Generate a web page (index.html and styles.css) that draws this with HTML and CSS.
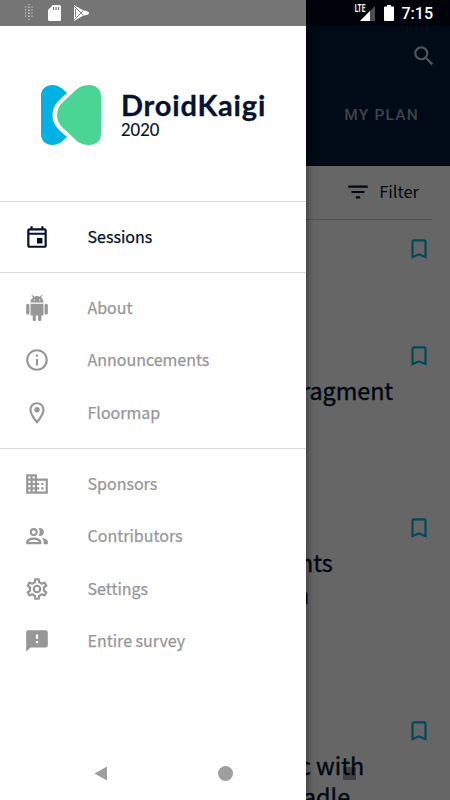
FILE: index.html
```
<!DOCTYPE html>
<html lang="en">
<head>
<meta charset="utf-8">
<title>DroidKaigi 2020</title>
<link rel="stylesheet" href="styles.css">
</head>
<body>
<div class="screen">
  <main class="page">
    <header class="appbar">
      <svg class="icon search" viewBox="0 0 24 24"><path d="M15.5 14h-.79l-.28-.27A6.47 6.47 0 0 0 16 9.5 6.5 6.5 0 1 0 9.5 16c1.61 0 3.09-.59 4.23-1.57l.27.28v.79l5 4.99L20.49 19l-4.99-5zm-6 0C7.01 14 5 11.99 5 9.500S7.010 5 9.500 5 14 7.010 14 9.500 11.990 14 9.500 14z"/></svg>
      <div class="tab">MY PLAN</div>
    </header>
    <div class="filter">
      <svg class="icon" viewBox="0 0 24 24"><path d="M10 18h4v-2h-4v2zM3 6v2h18V6H3zm3 7h12v-2H6v2z"/></svg>
      <span>Filter</span>
    </div>
    <article class="session s1">
      <svg class="icon mark" viewBox="0 0 24 24"><path d="M17 3H7c-1.100 0-1.990.9-1.990 2L5 21l7-3 7 3V5c0-1.100-.9-2-2-2zm0 15-5-2.180L7 18V5h10v13z"/></svg>
    </article>
    <article class="session s2">
      <svg class="icon mark" viewBox="0 0 24 24"><path d="M17 3H7c-1.100 0-1.990.9-1.990 2L5 21l7-3 7 3V5c0-1.100-.9-2-2-2zm0 15-5-2.180L7 18V5h10v13z"/></svg>
      <h2 class="t-fragment">ragment</h2>
    </article>
    <article class="session s3">
      <svg class="icon mark" viewBox="0 0 24 24"><path d="M17 3H7c-1.100 0-1.990.9-1.990 2L5 21l7-3 7 3V5c0-1.100-.9-2-2-2zm0 15-5-2.180L7 18V5h10v13z"/></svg>
      <h2 class="t-nts">nts</h2>
      <h2 class="t-n">n</h2>
    </article>
    <article class="session s4">
      <svg class="icon mark" viewBox="0 0 24 24"><path d="M17 3H7c-1.100 0-1.990.9-1.990 2L5 21l7-3 7 3V5c0-1.100-.9-2-2-2zm0 15-5-2.180L7 18V5h10v13z"/></svg>
      <h2 class="t-with">c with</h2>
      <h2 class="t-adle">adle</h2>
    </article>
  </main>
  <div class="scrim"></div>
  <aside class="drawer">
    <div class="brand">
      <svg class="logo" viewBox="0 0 60 60">
        <path fill="#00b1e4" d="M0 11C0 4 5 0 11.500 0 17 0 21 3 26 8 15 17 11.500 22 11.500 30S15 43 26 52c-5 5-9 8-14.500 8C5 60 0 56 0 49z"/>
        <path fill="#4bd595" d="M36 4c4-3 8-4 12-4 7 0 12 4 12 11v38c0 7-5 11-12 11-4 0-8-1-12-4L22 43c-8-7-8-19 0-26z"/>
      </svg>
      <div class="wordmark">
        <div class="name">DroidKaigi</div>
        <div class="year">2020</div>
      </div>
    </div>
    <nav>
      <div class="group">
        <div class="item active"><svg class="icon" viewBox="0 0 24 24"><path d="M19 4h-1V2h-2v2H8V2H6v2H5c-1.110 0-1.990.9-1.990 2L3 20c0 1.100.89 2 2 2h14c1.100 0 2-.9 2-2V6c0-1.100-.9-2-2-2zm0 16H5V10h14v10zm0-12H5V6h14v2zm-7 5h5v5h-5z"/></svg><span>Sessions</span></div>
      </div>
      <div class="group">
        <div class="item"><svg class="icon android" viewBox="0 0 24 24"><path d="M6 18c0 .55.45 1 1 1h1v3.500c0 .83.67 1.500 1.500 1.500s1.500-.67 1.500-1.500V19h2v3.500c0 .83.67 1.500 1.500 1.500s1.500-.67 1.500-1.500V19h1c.55 0 1-.45 1-1V8H6v10zM3.500 8C2.670 8 2 8.670 2 9.500v7c0 .83.67 1.500 1.500 1.500S5 17.330 5 16.500v-7C5 8.670 4.330 8 3.500 8zm17 0c-.83 0-1.500.67-1.500 1.500v7c0 .83.67 1.500 1.500 1.500s1.500-.67 1.500-1.500v-7c0-.83-.67-1.500-1.500-1.500zm-4.970-5.840 1.300-1.300c.2-.2.2-.51 0-.71s-.51-.2-.71 0l-1.480 1.480A5.840 5.840 0 0 0 12 1c-.96 0-1.860.23-2.660.63L7.850.15c-.2-.2-.51-.2-.71 0s-.2.51 0 .71l1.310 1.310A5.980 5.980 0 0 0 6 7h12c0-1.990-.97-3.750-2.470-4.840zM10 5H9V4h1v1zm5 0h-1V4h1v1z"/></svg><span>About</span></div>
        <div class="item"><svg class="icon" viewBox="0 0 24 24"><path d="M11 7h2v2h-2zm0 4h2v6h-2zm1-9C6.480 2 2 6.480 2 12s4.480 10 10 10 10-4.480 10-10S17.520 2 12 2zm0 18c-4.410 0-8-3.590-8-8s3.590-8 8-8 8 3.590 8 8-3.590 8-8 8z"/></svg><span>Announcements</span></div>
        <div class="item"><svg class="icon" viewBox="0 0 24 24"><path d="M12 2C8.130 2 5 5.130 5 9c0 5.250 7 13 7 13s7-7.750 7-13c0-3.870-3.130-7-7-7zM7 9c0-2.760 2.240-5 5-5s5 2.240 5 5c0 2.880-2.880 7.190-5 9.880C9.920 16.210 7 11.850 7 9z"/><circle cx="12" cy="9" r="2.500"/></svg><span>Floormap</span></div>
      </div>
      <div class="group">
        <div class="item"><svg class="icon" viewBox="0 0 24 24"><path d="M12 7V3H2v18h20V7H12zM6 19H4v-2h2v2zm0-4H4v-2h2v2zm0-4H4V9h2v2zm0-4H4V5h2v2zm4 12H8v-2h2v2zm0-4H8v-2h2v2zm0-4H8V9h2v2zm0-4H8V5h2v2zm10 12h-8v-2h2v-2h-2v-2h2v-2h-2V9h8v10zm-2-8h-2v2h2v-2zm0 4h-2v2h2v-2z"/></svg><span>Sponsors</span></div>
        <div class="item"><svg class="icon" viewBox="0 0 24 24"><path d="M9 4.700a3.700 3.700 0 1 0 0 7.400 3.700 3.700 0 0 0 0-7.400zm0 1.900a1.800 1.800 0 1 1 0 3.600 1.800 1.800 0 0 1 0-3.600zM13.600 4.900c1.200 1.800 1.200 5.100 0 7 2.300.8 4.800-.9 4.800-3.500s-2.500-4.300-4.800-3.500zM9 13.400c-2.500 0-7 1.300-7 3.900V19.500h14v-2.200c0-2.600-4.500-3.900-7-3.900zM4 17.600c.3-.9 2.700-2.200 5-2.200s4.700 1.300 5 2.200zM16.200 13.600c1.200.9 1.900 2.100 1.900 3.700v2.200H22v-2.200c0-2-3.300-3.300-5.800-3.700z"/></svg><span>Contributors</span></div>
        <div class="item"><svg class="icon" viewBox="0 0 24 24"><path d="M19.430 12.980c.04-.32.07-.64.07-.98s-.03-.66-.07-.98l2.110-1.650c.19-.15.24-.42.12-.64l-2-3.460a.5.5 0 0 0-.61-.22l-2.490 1c-.52-.4-1.080-.73-1.690-.98l-.38-2.650A.49.49 0 0 0 14 2h-4c-.25 0-.46.18-.49.42l-.38 2.650c-.61.25-1.170.59-1.690.98l-2.490-1a.5.5 0 0 0-.61.22l-2 3.460c-.13.22-.07.49.12.64l2.110 1.650c-.04.32-.07.65-.07.98s.03.66.07.98l-2.110 1.650c-.19.15-.24.42-.12.64l2 3.460c.12.22.39.3.61.22l2.490-1c.52.4 1.080.73 1.690.98l.38 2.650c.03.24.24.42.49.42h4c.25 0 .46-.18.49-.42l.38-2.650c.61-.25 1.170-.59 1.690-.98l2.490 1c.23.09.49 0 .61-.22l2-3.460c.12-.22.07-.49-.12-.64l-2.110-1.650zm-1.980-1.710c.04.31.05.52.05.73s-.02.43-.05.73l-.14 1.130.89.7 1.080.84-.7 1.210-1.270-.51-1.040-.42-.9.68c-.43.32-.84.56-1.250.73l-1.060.43-.16 1.130-.2 1.350h-1.400l-.19-1.350-.16-1.130-1.060-.43c-.43-.18-.83-.41-1.230-.71l-.91-.7-1.060.43-1.270.51-.7-1.210 1.080-.84.89-.7-.14-1.130c-.03-.31-.05-.54-.05-.74s.02-.43.05-.73l.14-1.130-.89-.7-1.080-.84.7-1.210 1.270.51 1.040.42.9-.68c.43-.32.84-.56 1.250-.73l1.060-.43.16-1.130.2-1.350h1.390l.19 1.350.16 1.130 1.060.43c.43.18.83.41 1.230.71l.91.7 1.060-.43 1.270-.51.7 1.210-1.070.85-.89.7.14 1.130zM12 8a4 4 0 1 0 0 8 4 4 0 0 0 0-8zm0 6a2 2 0 1 1 0-4 2 2 0 0 1 0 4z"/></svg><span>Settings</span></div>
        <div class="item"><svg class="icon" viewBox="0 0 24 24"><path d="M20 2H4c-1.100 0-1.990.9-1.990 2L2 22l4-4h14c1.100 0 2-.9 2-2V4c0-1.100-.9-2-2-2zm-7 12h-2v-2h2v2zm0-4h-2V6h2v4z"/></svg><span>Entire survey</span></div>
      </div>
    </nav>
  </aside>
  <div class="statusbar">
    <svg class="dots" viewBox="0 0 10 18"><path d="M1 3h8M1 6h8M1 9h8M1 12h8" stroke="#ddd" stroke-width="1.200" stroke-dasharray="1.200 2"/><path d="M5 0v18" stroke="#ddd" stroke-dasharray="1 2"/></svg>
    <svg class="sd" viewBox="0 0 13 16"><path fill="#fff" d="M5 0h6.500Q13 0 13 1.500v13q0 1.500-1.500 1.500h-10Q0 16 0 14.500V5z"/><path d="M5.500 2v3M8 2v3M10.500 2v3" stroke="#757575" stroke-width="1.200"/></svg>
    <svg class="play" viewBox="0 0 15 16"><path fill="#fff" d="M0 0 9.500 5.500Q15 6 15 8t-5.500 2.500L0 16z"/><path d="m0 1 9 9M0 15l9-9M1.500 4v8" stroke="#757575" stroke-width=".9" fill="none"/></svg>
    <span class="spacer"></span>
    <span class="lte">LTE</span>
    <svg class="signal" viewBox="0 0 15 15"><path fill="#4b4d51" d="M15 0v15H0z"/><path fill="#fff" d="M10 5v10H0z"/></svg>
    <svg class="battery" viewBox="0 0 10 16"><path fill="#fff" d="M3 0h4v1.500h2q1 0 1 1V15q0 1-1 1H1q-1 0-1-1V2.500q0-1 1-1h2z"/></svg>
    <span class="clock">7:15</span>
  </div>
  <div class="navbar">
    <svg class="back" viewBox="0 0 13 15"><path d="M13 .5v14L.5 7.500z"/></svg>
    <span class="home"></span>
    <span class="recent"></span>
  </div>
</div>
</body>
</html>
```
FILE: styles.css
```
* { box-sizing: border-box; }
body { margin: 0; font-family: "Noto Sans CJK JP", sans-serif; }
.screen { position: relative; width: 450px; height: 800px; overflow: hidden; background: #fff; }
.icon { width: 26px; height: 26px; fill: currentColor; flex: none; display: block; }

.page { height: 800px; overflow: hidden; color: #041534; }
.appbar { height: 166px; background: #041b3a; color: #fff; display: flex; flex-direction: column; align-items: flex-end; padding: 43px 13px 0 0; }
.search { opacity: .8; }
.tab { margin: 36px 18px 0 0; font: 500 15.500px/20px Roboto, sans-serif; letter-spacing: 1.200px; color: #a0a5ae; }
.filter { height: 54px; margin-right: 18px; border-bottom: 1px solid #cfcfcf; display: flex; align-items: center; justify-content: flex-end; gap: 8px; padding: 0 13px 2px 0; font-size: 16.500px; }
.filter span { margin-top: -1px; }
.session { padding: 16px 18px 0 306px; overflow: hidden; }
.mark { margin-left: auto; color: #00b5e2; }
.s1 { height: 107px; }
.s2 { height: 172px; }
.s3 { height: 203px; }
.s4 { height: 98px; }
.session h2 { margin: 0; font-size: 23.300px; line-height: 32px; font-weight: 400; -webkit-text-stroke: .4px; white-space: nowrap; }
.session h2:first-of-type { margin-top: 5px; }
.session .t-fragment { margin-left: -5px; }
.session .t-nts { margin-left: -7px; }
.session .t-n { margin-left: -11px; }
.session .t-with { margin-left: -7px; margin-top: 6px; }
.session .t-adle { margin-left: -3px; line-height: 30px; }

.scrim { position: absolute; inset: 0; background: rgba(0, 0, 0, .6); }
.drawer { position: absolute; top: 0; left: 0; width: 306px; height: 800px; background: #fff; box-shadow: 0 0 9px rgba(0, 0, 0, .6); }
.brand { height: 201px; padding: 85px 0 0 41px; display: flex; gap: 20px; }
.logo { width: 60px; height: 60px; }
.wordmark { color: #061230; font-family: Lato, sans-serif; padding-top: 2px; }
.name { font-size: 29px; line-height: 35px; font-weight: 700; letter-spacing: .8px; white-space: nowrap; -webkit-text-stroke: .3px; }
.year { font-size: 16.500px; line-height: 17px; font-weight: 400; -webkit-text-stroke: .2px; }
.group { border-top: 1px solid #dadada; padding: 8.500px 0 9px; }
.item { height: 52.500px; display: flex; align-items: center; padding-left: 24px; gap: 37.500px; color: #979797; font-size: 16px; -webkit-text-stroke: .25px; }
.item.active { color: #041029; }
.item span { position: relative; top: -1px; }

.statusbar { position: absolute; top: 0; left: 0; width: 450px; height: 26px; background: rgba(0, 0, 0, .54); display: flex; align-items: center; padding: 0 17px 0 24px; color: #fff; }
.dots { width: 10px; height: 18px; }
.sd { width: 13px; height: 16px; margin-left: 14px; }
.play { width: 15px; height: 16px; margin-left: 13px; }
.spacer { flex: 1; }
.lte { font: 700 10px/10px Roboto, sans-serif; align-self: flex-start; margin: 4px -9px 0 0; transform: scaleX(.65); }
.signal { width: 15px; height: 15px; margin-top: 1px; }
.battery { width: 10px; height: 16px; margin: 0 8px 0 9px; }
.clock { font: 500 16px/20px Roboto, sans-serif; margin-top: 2px; }

.navbar { position: absolute; left: 0; bottom: 1px; width: 450px; height: 52px; display: flex; align-items: center; justify-content: space-between; padding: 0 94px; }
.back { width: 13px; height: 15px; fill: #9e9e9e; }
.home { width: 15px; height: 15px; border-radius: 50%; background: #9e9e9e; }
.recent { width: 13px; height: 13px; background: rgba(0, 0, 0, .38); }
```
